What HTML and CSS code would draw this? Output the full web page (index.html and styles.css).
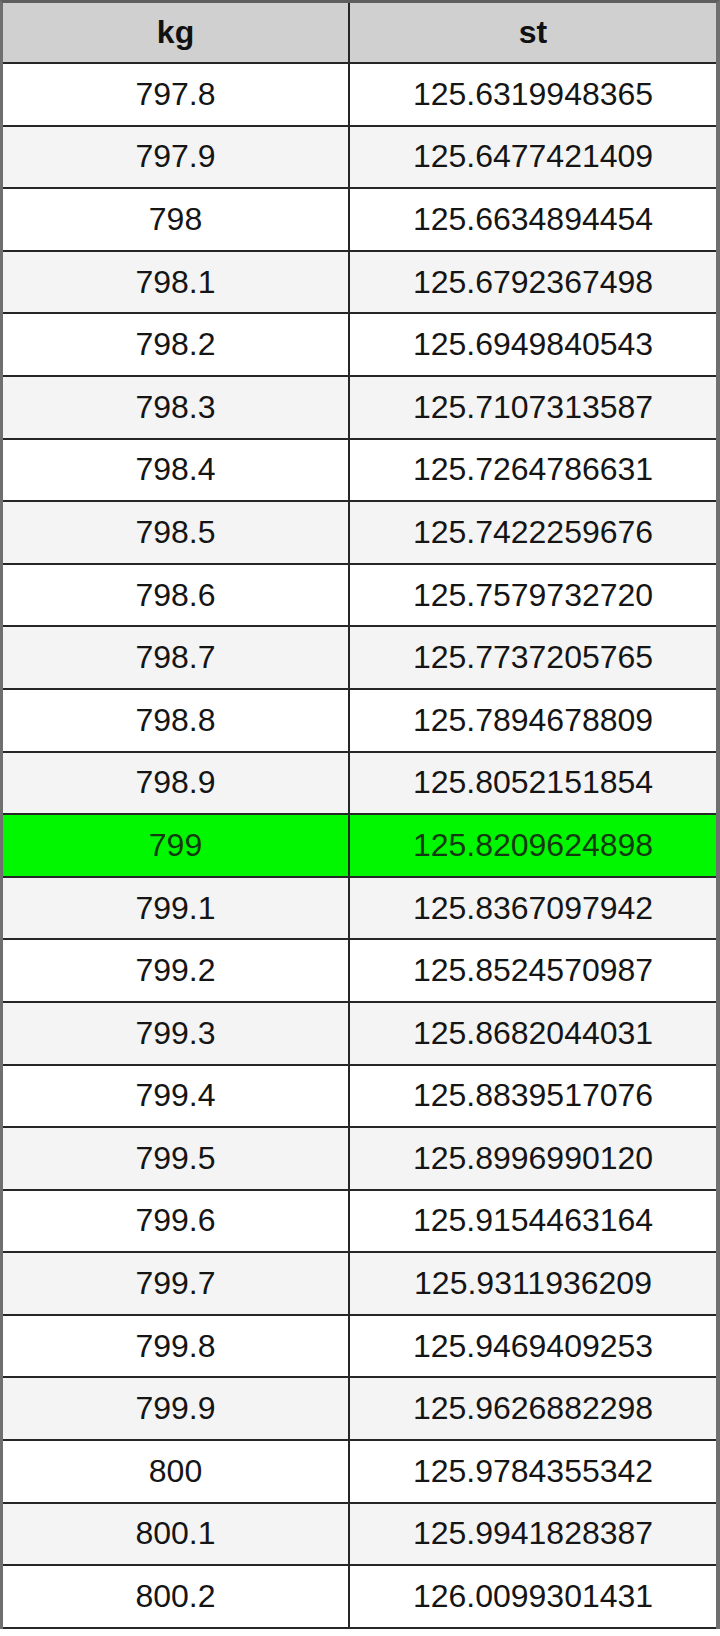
FILE: index.html
```html
<!DOCTYPE html>
<html>
<head>
<meta charset="utf-8">
<link rel="stylesheet" href="styles.css">
</head>
<body>
<div class="table">
  <div class="row head"><div class="cell left">kg</div><div class="cell right">st</div></div>
  <div class="row"><div class="cell left">797.8</div><div class="cell right">125.6319948365</div></div>
  <div class="row alt"><div class="cell left">797.9</div><div class="cell right">125.6477421409</div></div>
  <div class="row"><div class="cell left">798</div><div class="cell right">125.6634894454</div></div>
  <div class="row alt"><div class="cell left">798.1</div><div class="cell right">125.6792367498</div></div>
  <div class="row"><div class="cell left">798.2</div><div class="cell right">125.6949840543</div></div>
  <div class="row alt"><div class="cell left">798.3</div><div class="cell right">125.7107313587</div></div>
  <div class="row"><div class="cell left">798.4</div><div class="cell right">125.7264786631</div></div>
  <div class="row alt"><div class="cell left">798.5</div><div class="cell right">125.7422259676</div></div>
  <div class="row"><div class="cell left">798.6</div><div class="cell right">125.7579732720</div></div>
  <div class="row alt"><div class="cell left">798.7</div><div class="cell right">125.7737205765</div></div>
  <div class="row"><div class="cell left">798.8</div><div class="cell right">125.7894678809</div></div>
  <div class="row alt"><div class="cell left">798.9</div><div class="cell right">125.8052151854</div></div>
  <div class="row hl"><div class="cell left">799</div><div class="cell right">125.8209624898</div></div>
  <div class="row alt"><div class="cell left">799.1</div><div class="cell right">125.8367097942</div></div>
  <div class="row"><div class="cell left">799.2</div><div class="cell right">125.8524570987</div></div>
  <div class="row alt"><div class="cell left">799.3</div><div class="cell right">125.8682044031</div></div>
  <div class="row"><div class="cell left">799.4</div><div class="cell right">125.8839517076</div></div>
  <div class="row alt"><div class="cell left">799.5</div><div class="cell right">125.8996990120</div></div>
  <div class="row"><div class="cell left">799.6</div><div class="cell right">125.9154463164</div></div>
  <div class="row alt"><div class="cell left">799.7</div><div class="cell right">125.9311936209</div></div>
  <div class="row"><div class="cell left">799.8</div><div class="cell right">125.9469409253</div></div>
  <div class="row alt"><div class="cell left">799.9</div><div class="cell right">125.9626882298</div></div>
  <div class="row"><div class="cell left">800</div><div class="cell right">125.9784355342</div></div>
  <div class="row alt"><div class="cell left">800.1</div><div class="cell right">125.9941828387</div></div>
  <div class="row last"><div class="cell left">800.2</div><div class="cell right">126.0099301431</div></div>
</div>
</body>
</html>
```

FILE: styles.css
```css
html, body {
  margin: 0;
  padding: 0;
  background: #ffffff;
}

.table {
  width: 720px;
  box-sizing: border-box;
  border-left: 3px solid #6f6f6f;
  border-right: 4px solid #6f6f6f;
  border-top: 3px solid #5e5e5e;
  font-family: "Liberation Sans", Arial, sans-serif;
  font-size: 32px;
  color: #151515;
}

.row {
  display: flex;
  height: 62.6px;
  box-sizing: border-box;
  border-bottom: 2px solid #262626;
  background: #ffffff;
}

.row.alt {
  background: #f4f4f4;
}

.row.head {
  height: 61px;
  background: #d0d0d0;
  font-weight: bold;
  color: #111111;
}

.row.hl {
  background: #00f700;
  color: #123a12;
}

.row.last {
  border-bottom-width: 2px;
}

.cell {
  display: flex;
  align-items: center;
  justify-content: center;
}

.cell.left {
  width: 345px;
  flex: none;
  border-right: 2px solid #262626;
}

.cell.right {
  flex: 1;
}
```
